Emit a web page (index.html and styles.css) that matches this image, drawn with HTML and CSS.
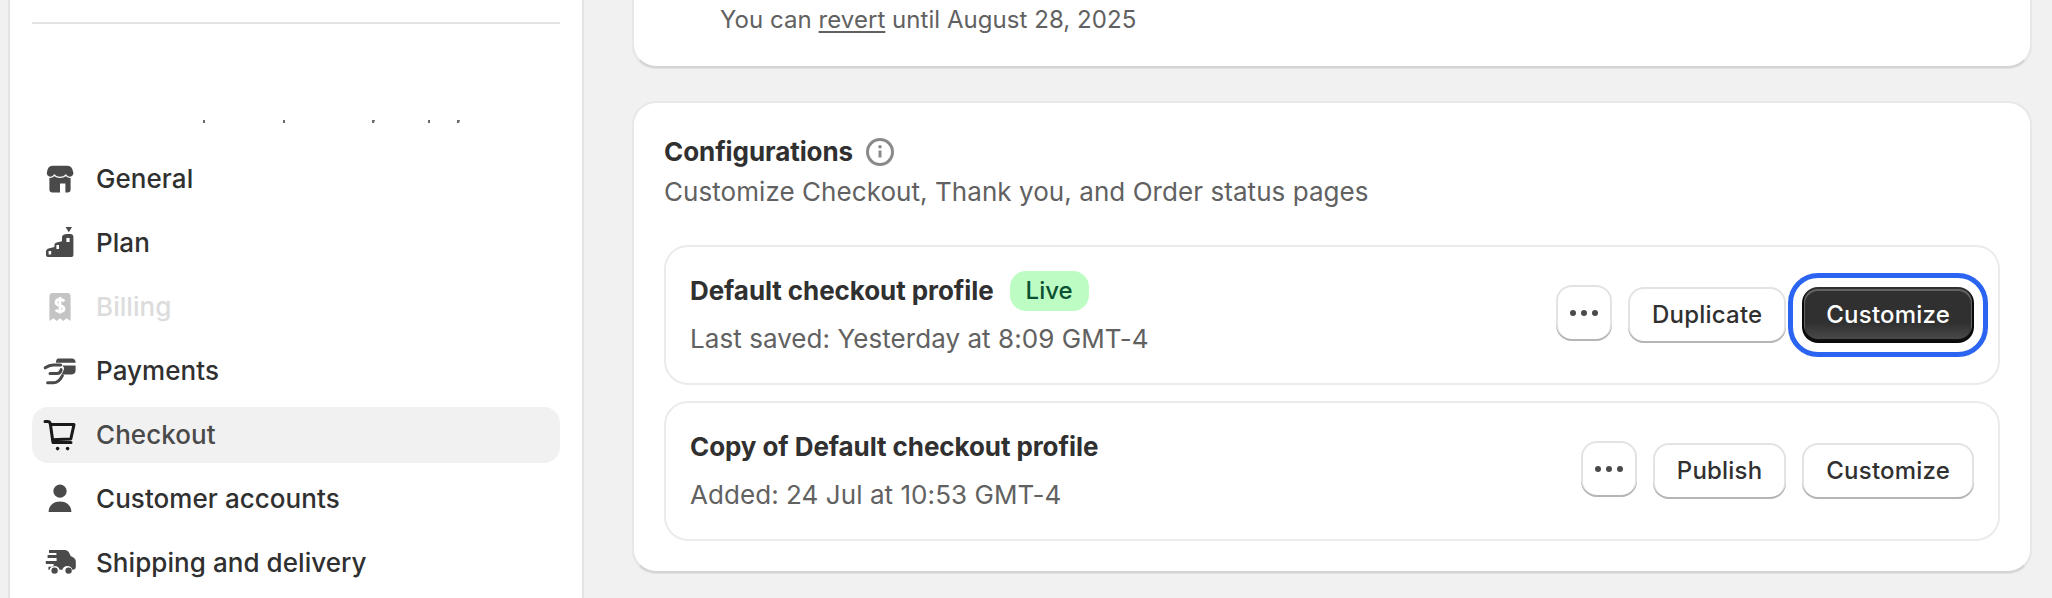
FILE: index.html
```html
<!DOCTYPE html>
<html lang="en">
<head>
<meta charset="utf-8">
<title>Checkout settings</title>
<link rel="stylesheet" href="styles.css">
</head>
<body>
<div class="page">
  <aside class="sidebar">
    <div class="rule"></div>
    <svg class="clipped" width="528" height="4" viewBox="0 0 528 4" aria-hidden="true">
      <rect x="171" y="1" width="2" height="3"/><rect x="251" y="1" width="2" height="3"/>
      <path d="M340 1h3l-1 3h-2zM425 1h3l-1 3h-2z"/><rect x="396" y="1" width="2" height="3"/>
    </svg>
    <nav class="nav">
      <a class="nav-item">
        <svg class="icon" viewBox="0 0 20 20"><path d="M4.7 8h10.6v7.300a1.500 1.500 0 0 1-1.500 1.500h-1.100V12.300H10v4.500H6.200a1.500 1.500 0 0 1-1.500-1.500z"/><path class="cut" d="M6.300 3h7.400c1.300 0 2.400.8 2.800 2l.5 1.600c.3 1.200-.6 2.600-2 2.600-.9 0-1.600-.4-2.100-1.100-.5.7-1.600 1.100-2.900 1.100s-2.300-.4-2.800-1.100c-.5.7-1.200 1.100-2.100 1.100-1.400 0-2.300-1.400-2-2.600L3.500 5c.4-1.200 1.500-2 2.800-2z"/></svg>
        <span>General</span>
      </a>
      <a class="nav-item">
        <svg class="icon" viewBox="0 0 20 20"><path d="M12.800 2h3.200l-1.600 2.600z"/><path fill-rule="evenodd" d="M13.500 5.500h1.800c.8 0 1.400.6 1.400 1.400V16c0 .6-.4 1-1 1H4c-.6 0-1-.4-1-1v-1.800c0-.7.5-1.300 1.200-1.500l3-.7v-.9c0-.7.5-1.300 1.200-1.400l2.600-.6V7c0-.8 1-1.500 2.500-1.500zM4.300 14v1.800h1.300V14zM8.200 11v2h1.300v-2zM13.200 7.500v2h1.600v-2z"/></svg>
        <span>Plan</span>
      </a>
      <a class="nav-item muted">
        <svg class="icon" viewBox="0 0 20 20"><path d="M6.200 3h7.600c.8 0 1.500.7 1.500 1.500V17l-2-1.400-1.700 1.400-1.600-1.400-1.600 1.400-1.700-1.400-2 1.400V4.500c0-.8.700-1.500 1.500-1.500z"/><path class="glyph" d="M12 7.200c-.3-.6-1-1-2-1-1.200 0-2 .6-2 1.500 0 2 4 1.100 4 3.100 0 .9-.8 1.500-2 1.500-1 0-1.700-.4-2-1M10 5v8.300"/></svg>
        <span>Billing</span>
      </a>
      <a class="nav-item">
        <svg class="icon" viewBox="0 0 20 20"><path d="M9.200 3.700h6.800c1 0 1.800.8 1.800 1.800v.4H8c0-1.300.3-2.200 1.200-2.200zM8.300 7.300h9.500v2.600c0 1-.8 1.800-1.800 1.800h-3.500l-1.600-.1 1.100-2.500c.2-.9-.5-1.800-1.300-1.800z"/><path class="line" d="M2.600 8.400c1.400-1 2.900-1.500 4.400-1.400h3.300M5 11.200h3.600c1.200 0 1.800-.9 2-1.900M3.800 15.900h2.900c2.300 0 3.500-1.600 4.500-3.600"/></svg>
        <span>Payments</span>
      </a>
      <a class="nav-item active">
        <svg class="icon" viewBox="0 0 20 20"><path class="line" d="M2.500 3.300h1.200c.8 0 1.400.5 1.500 1.300L6.500 13.800h9M5.300 4.800H17L15.400 12 6.200 12.400"/><circle class="dot" cx="8.800" cy="16.800" r=".9"/><circle class="dot" cx="13.800" cy="16.800" r=".9"/></svg>
        <span>Checkout</span>
      </a>
      <a class="nav-item">
        <svg class="icon" viewBox="0 0 20 20"><circle cx="10" cy="6.100" r="3.300"/><path d="M4.300 16.500c0-3.200 2.500-5.200 5.700-5.200s5.700 2 5.700 5.200z"/></svg>
        <span>Customer accounts</span>
      </a>
      <a class="nav-item">
        <svg class="icon" viewBox="0 0 20 20"><path d="M8.200 3.500h4.200c.9 0 1.700.5 2.100 1.300l.8 1.700 1.400.8c.7.4 1.200 1.100 1.200 2V12c0 .8-.6 1.400-1.400 1.400h-.3a2.600 2.600 0 0 0-5 0H9.800a2.600 2.600 0 0 0-5 0h-.6v-1.500h2.600V10.500H2.900V9h5.400V7.500H3.800V6h4.400V5H4.500V3.500z"/><circle cx="7.300" cy="13.800" r="1.600"/><circle cx="14.300" cy="13.800" r="1.600"/></svg>
        <span>Shipping and delivery</span>
      </a>
    </nav>
  </aside>
  <main class="main">
    <section class="card card-cut">
      <p class="note">You can <u>revert</u> until August 28, 2025</p>
    </section>
    <section class="card card-config">
      <h2 class="heading">Configurations
        <svg class="info" viewBox="0 0 28 28"><circle cx="14" cy="14" r="12.500"/><path d="M14 12.500v7"/><circle class="info-dot" cx="14" cy="8.700" r="1.800"/></svg>
      </h2>
      <p class="sub">Customize Checkout, Thank you, and Order status pages</p>
      <div class="profiles">
        <article class="profile">
          <div class="profile-text">
            <div class="profile-title"><strong>Default checkout profile</strong><span class="badge">Live</span></div>
            <p class="sub">Last saved: Yesterday at 8:09 GMT-4</p>
          </div>
          <div class="actions">
            <button class="btn btn-icon"><svg viewBox="0 0 40 40"><circle cx="9" cy="20" r="3"/><circle cx="20" cy="20" r="3"/><circle cx="31" cy="20" r="3"/></svg></button>
            <button class="btn">Duplicate</button>
            <button class="btn btn-primary">Customize</button>
          </div>
        </article>
        <article class="profile">
          <div class="profile-text">
            <div class="profile-title"><strong>Copy of Default checkout profile</strong></div>
            <p class="sub">Added: 24 Jul at 10:53 GMT-4</p>
          </div>
          <div class="actions">
            <button class="btn btn-icon"><svg viewBox="0 0 40 40"><circle cx="9" cy="20" r="3"/><circle cx="20" cy="20" r="3"/><circle cx="31" cy="20" r="3"/></svg></button>
            <button class="btn">Publish</button>
            <button class="btn">Customize</button>
          </div>
        </article>
      </div>
    </section>
  </main>
</div>
</body>
</html>
```

FILE: styles.css
```css
* { box-sizing: border-box; }
html, body { margin: 0; height: 100%; overflow: hidden; }
body {
  background: #f1f1f1;
  font-family: Inter, "Liberation Sans", sans-serif;
  font-size: 26px;
  line-height: 40px;
  color: #303030;
}
.page { display: flex; height: 598px; overflow: hidden; }

.sidebar {
  width: 576px;
  flex: none;
  margin-left: 8px;
  padding: 22px 22px 0;
  background: #fff;
  border-left: 2px solid #e3e3e3;
  border-right: 2px solid #e3e3e3;
  overflow: hidden;
}
.rule { height: 2px; background: #e3e3e3; }
.clipped { display: block; margin-top: 95px; fill: #6a6a6a; }
.nav { display: flex; flex-direction: column; gap: 8px; margin-top: 28px; }
.nav-item {
  display: flex;
  align-items: center;
  gap: 16px;
  height: 56px;
  padding: 0 8px;
  border-radius: 16px;
  font-weight: 550;
  letter-spacing: .06px;
  flex: none;
}
.icon { width: 40px; height: 40px; flex: none; fill: #4a4a4a; }
.icon .cut { stroke: #fff; stroke-width: .7; }
.icon .glyph { fill: none; stroke: #fff; stroke-width: 1.4; }
.icon .line { fill: none; stroke: #4a4a4a; stroke-width: 1.5; stroke-linecap: round; stroke-linejoin: round; }
.nav-item.muted { color: #dcdcdc; }
.nav-item.muted .icon { fill: #c4c4c4; }
.nav-item.active { background: #f1f1f1; color: #4a4a4a; }
.nav-item.active .line { stroke: #1a1a1a; stroke-width: 1.5; }
.nav-item.active .dot { fill: #1a1a1a; }

.main { flex: 1; min-width: 0; padding: 0 20px 0 48px; }
.card {
  background: #fff;
  border: 2px solid #e8e8e8;
  border-bottom-color: #d4d4d4;
  border-radius: 24px;
  box-shadow: 0 1px 0 rgba(26, 26, 26, .07);
}
.card-cut {
  height: 68px;
  border-top: 0;
  border-radius: 0 0 24px 24px;
  padding-left: 86px;
}
.note { margin: 0; color: #616161; font-size: 24px; letter-spacing: .05px; }
.note u { text-underline-offset: 3px; }
.card-config {
  margin-top: 33px;
  height: 472px;
  padding: 29px 30px 0;
}
.heading {
  display: flex;
  align-items: center;
  gap: 13px;
  margin: 0;
  font-size: 26px;
  line-height: 40px;
  font-weight: 650;
  letter-spacing: -.08px;
}
.info { width: 28px; height: 28px; fill: none; stroke: #8a8a8a; stroke-width: 3; }
.info .info-dot { fill: #8a8a8a; stroke: none; }
.sub { margin: 0; color: #616161; letter-spacing: .06px; }
.profiles { display: flex; flex-direction: column; gap: 16px; margin-top: 33px; }
.profile {
  display: flex;
  align-items: center;
  justify-content: space-between;
  border: 2px solid #ebebeb;
  border-radius: 24px;
  padding: 24px;
}
.profile-text { display: flex; flex-direction: column; gap: 8px; }
.profile-title { display: flex; align-items: center; gap: 16px; }
.profile-title strong { font-weight: 650; letter-spacing: -.08px; }
.badge {
  background: #bdfdc4;
  color: #0c5132;
  border-radius: 16px;
  padding: 0 16px;
  height: 40px;
  font-size: 24px;
  font-weight: 450;
}
.actions { display: flex; align-items: center; gap: 16px; }
.btn {
  height: 56px;
  padding: 0 24px;
  border: 0;
  border-radius: 16px;
  background: #fff;
  color: #303030;
  font: 550 24px/40px Inter, "Liberation Sans", sans-serif;
  letter-spacing: .2px;
  box-shadow: inset 0 -2px 0 0 #b5b5b5, inset 0 0 0 2px #e3e3e3, inset 0 1px 0 3px #fff;
}
.btn-icon { width: 56px; padding: 8px; position: relative; top: -2px; }
.btn-icon svg { display: block; width: 40px; height: 40px; fill: #4a4a4a; }
.btn-primary {
  color: #fff;
  background: linear-gradient(180deg, rgba(48,48,48,0) 63%, rgba(255,255,255,.15)), #303030;
  box-shadow: inset 0 -2px 0 2px rgba(0,0,0,.8), inset 0 0 0 2px #303030, inset 0 1px 0 3px rgba(255,255,255,.25);
  outline: 5px solid #2b64f0;
  outline-offset: 9px;
}
```
